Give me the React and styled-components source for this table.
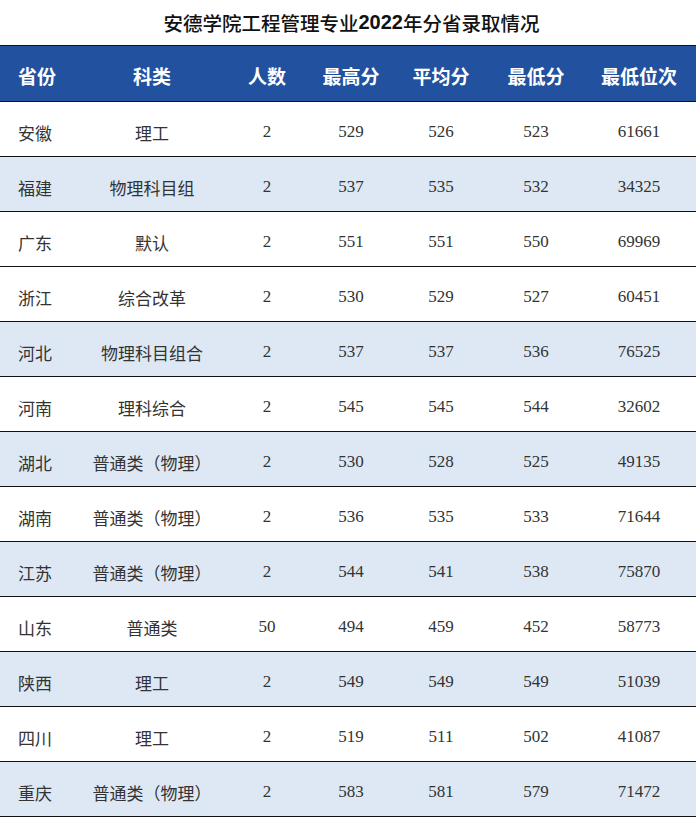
import React from "react";
import styled, { createGlobalStyle } from "styled-components";

const GlobalStyle = createGlobalStyle`
  body {
    margin: 0;
    background: #fff;
  }
`;

const cols = "80px 144px 86px 82px 98px 92px 114px";

const Page = styled.div`
  width: 699px;
`;

const Title = styled.h1`
  margin: 0;
  height: 45px;
  display: flex;
  align-items: center;
  justify-content: center;
  padding-left: 4px;
  font-family: "Liberation Serif", "Noto Sans CJK SC", serif;
  font-size: 19.5px;
  font-weight: 500;
  color: #111;

  b {
    font-family: "Liberation Sans", sans-serif;
    font-weight: 700;
    font-size: 20px;
  }
`;

const Table = styled.div`
  width: 696px;
  border-top: 1px solid #111;
`;

const HeaderRow = styled.div`
  display: grid;
  grid-template-columns: ${cols};
  height: 55px;
  background: #22519f;
  border-bottom: 1px solid #111;
  color: #fff;
  font-family: "Noto Sans CJK SC", "Liberation Sans", sans-serif;
  font-weight: 700;
  font-size: 19px;
`;

const Row = styled.div`
  display: grid;
  grid-template-columns: ${cols};
  height: 54px;
  background: ${(p) => (p.$alt ? "#dde8f4" : "#fff")};
  border-bottom: 1px solid #111;
  color: #333;
  font-family: "Liberation Serif", "Noto Sans CJK SC", serif;
  font-size: 17px;
`;

const Cell = styled.div`
  display: flex;
  align-items: center;
  justify-content: ${(p) => (p.$left ? "flex-start" : "center")};
  padding-left: ${(p) => (p.$left ? "18px" : "0")};
  padding-top: ${(p) => (p.$head ? "4px" : "6px")};
  white-space: nowrap;
`;

const headers = ["省份", "科类", "人数", "最高分", "平均分", "最低分", "最低位次"];

// 最后一项表示该行是否为浅蓝底色
const data = [
  ["安徽", "理工", "2", "529", "526", "523", "61661", false],
  ["福建", "物理科目组", "2", "537", "535", "532", "34325", true],
  ["广东", "默认", "2", "551", "551", "550", "69969", false],
  ["浙江", "综合改革", "2", "530", "529", "527", "60451", false],
  ["河北", "物理科目组合", "2", "537", "537", "536", "76525", true],
  ["河南", "理科综合", "2", "545", "545", "544", "32602", false],
  ["湖北", "普通类（物理）", "2", "530", "528", "525", "49135", true],
  ["湖南", "普通类（物理）", "2", "536", "535", "533", "71644", false],
  ["江苏", "普通类（物理）", "2", "544", "541", "538", "75870", true],
  ["山东", "普通类", "50", "494", "459", "452", "58773", false],
  ["陕西", "理工", "2", "549", "549", "549", "51039", true],
  ["四川", "理工", "2", "519", "511", "502", "41087", false],
  ["重庆", "普通类（物理）", "2", "583", "581", "579", "71472", true],
];

const App = () => {
  return (
    <Page>
      <GlobalStyle />
      <Title>
        安德学院工程管理专业<b>2022</b>年分省录取情况
      </Title>
      <Table>
        <HeaderRow>
          {headers.map((h, i) => (
            <Cell key={h} $head $left={i === 0}>
              {h}
            </Cell>
          ))}
        </HeaderRow>
        {data.map((row) => (
          <Row key={row[0]} $alt={row[7]}>
            {row.slice(0, 7).map((v, i) => (
              <Cell key={i} $left={i === 0}>
                {v}
              </Cell>
            ))}
          </Row>
        ))}
      </Table>
    </Page>
  );
};

export default App;
